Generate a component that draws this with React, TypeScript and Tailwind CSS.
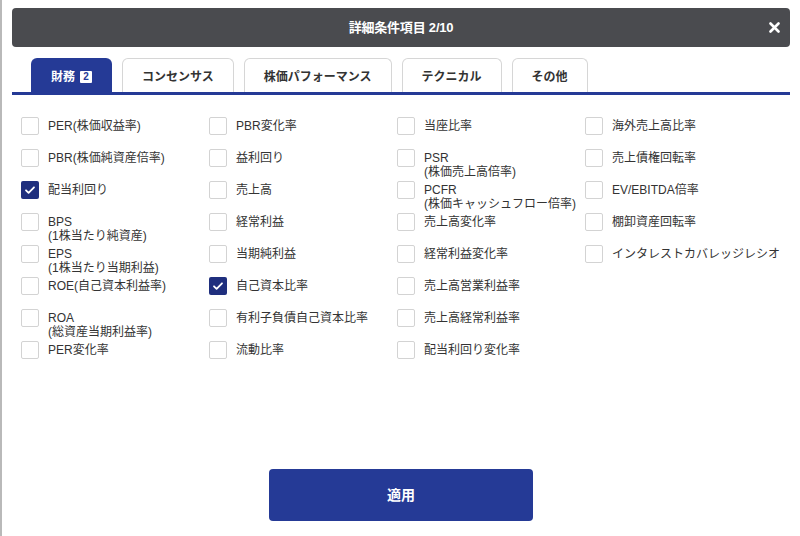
const font = { fontFamily: '"Liberation Sans", "Noto Sans CJK JP", sans-serif' };

type Item = { label: string; sub?: string; checked?: boolean };

const items: Item[] = [
  // column 1
  { label: 'PER(株価収益率)' },
  { label: 'PBR(株価純資産倍率)' },
  { label: '配当利回り', checked: true },
  { label: 'BPS', sub: '(1株当たり純資産)' },
  { label: 'EPS', sub: '(1株当たり当期利益)' },
  { label: 'ROE(自己資本利益率)' },
  { label: 'ROA', sub: '(総資産当期利益率)' },
  { label: 'PER変化率' },
  // column 2
  { label: 'PBR変化率' },
  { label: '益利回り' },
  { label: '売上高' },
  { label: '経常利益' },
  { label: '当期純利益' },
  { label: '自己資本比率', checked: true },
  { label: '有利子負債自己資本比率' },
  { label: '流動比率' },
  // column 3
  { label: '当座比率' },
  { label: 'PSR', sub: '(株価売上高倍率)' },
  { label: 'PCFR', sub: '(株価キャッシュフロー倍率)' },
  { label: '売上高変化率' },
  { label: '経常利益変化率' },
  { label: '売上高営業利益率' },
  { label: '売上高経常利益率' },
  { label: '配当利回り変化率' },
  // column 4
  { label: '海外売上高比率' },
  { label: '売上債権回転率' },
  { label: 'EV/EBITDA倍率' },
  { label: '棚卸資産回転率' },
  { label: 'インタレストカバレッジレシオ' },
];

const tabs = ['コンセンサス', '株価パフォーマンス', 'テクニカル', 'その他'];

function Checkbox({ checked }: { checked?: boolean }) {
  if (checked) {
    return (
      <span className="flex h-[18px] w-[18px] shrink-0 items-center justify-center rounded-[2px] bg-[#1f2f7e]">
        <svg width="12" height="12" viewBox="0 0 12 12" fill="none">
          <path d="M2 6.3l2.6 2.6L10 3.3" stroke="white" strokeWidth="1.8" strokeLinecap="round" strokeLinejoin="round" />
        </svg>
      </span>
    );
  }
  return <span className="h-[18px] w-[18px] shrink-0 rounded-[2px] border border-[#d3d3d3] bg-white" />;
}

export default function App() {
  return (
    <div className="h-[536px] w-full overflow-hidden border-l-2 border-[#b9b9b9] bg-white text-[#333]" style={font}>
      {/* Header */}
      <div className="mx-[10px] mt-[8px] flex h-[39px] items-center rounded-[4px] bg-[#4a4b4f] text-white">
        <div className="w-[32px]" />
        <div className="flex-1 text-center text-[13px] font-bold tracking-[-0.2px]">詳細条件項目 2/10</div>
        <div className="flex w-[32px] items-center justify-center">
          <svg width="11" height="11" viewBox="0 0 11 11">
            <path d="M1.5 1.5l8 8M9.5 1.5l-8 8" stroke="white" strokeWidth="2.6" strokeLinecap="round" />
          </svg>
        </div>
      </div>

      {/* Tabs */}
      <div className="mx-[10px] mt-[11px] flex items-end gap-[10px] border-b-[3px] border-[#253a96] pl-[19px]">
        <div className="flex h-[34px] items-center gap-[5px] rounded-t-[6px] bg-[#253a96] px-[20px] pt-[3px] text-[12px] font-bold text-white">
          <span>財務</span>
          <span className="flex h-[12px] w-[12px] items-center justify-center rounded-[1px] bg-white text-[10px] leading-none text-[#253a96]">2</span>
        </div>
        {tabs.map((t) => (
          <div
            key={t}
            className="flex h-[34px] items-center rounded-t-[6px] border border-b-0 border-[#d6d6d6] bg-white px-[19px] pt-[3px] text-[12px] font-bold text-[#333]"
          >
            {t}
          </div>
        ))}
      </div>

      {/* Checkbox grid */}
      <div className="ml-[19px] mt-[22px] grid grid-flow-col grid-cols-[repeat(4,188px)] grid-rows-[repeat(8,32px)]">
        {items.map((it) => (
          <div key={it.label} className="flex items-start gap-[9px]">
            <Checkbox checked={it.checked} />
            <div className="whitespace-nowrap pt-[2px] text-[12px] leading-[14px] text-[#333]">
              <div>{it.label}</div>
              {it.sub && <div>{it.sub}</div>}
            </div>
          </div>
        ))}
      </div>

      {/* Apply */}
      <div className="mt-[96px] flex justify-center">
        <button className="h-[52px] w-[264px] rounded-[4px] bg-[#253a96] text-[14px] font-bold text-white">適用</button>
      </div>
    </div>
  );
}
